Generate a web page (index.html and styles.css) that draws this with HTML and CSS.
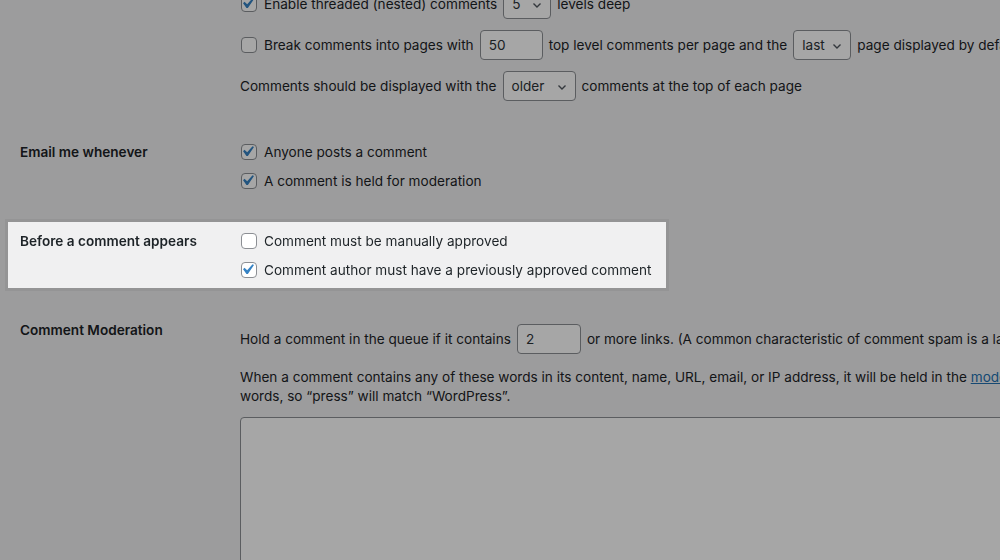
FILE: index.html
```html
<!DOCTYPE html>
<html>
<head>
    <title>Discussion Settings</title>
    <meta charset="utf-8">
    <link rel="stylesheet" href="styles.css">
</head>
<body>
<div class="overlay"></div>

<div class="page">

    <div class="row row-other">
        <div class="th"></div>
        <div class="td lines-wide">
            <div class="line">
                <label class="check"><span class="box"><svg class="tick" viewBox="0 0 20 20"><path d="M14.83 4.89l1.34.94-5.81 8.38H9.02L5.78 9.67l1.34-1.25 2.57 2.4z"/></svg></span>Enable threaded (nested) comments</label>
                <span class="select sel-5">5<svg class="chev" viewBox="0 0 12 12"><path d="M2.5 4.5l3.5 3.5 3.5-3.5"/></svg></span>
                <span>levels deep</span>
            </div>
            <div class="line">
                <label class="check"><span class="box"></span>Break comments into pages with</label>
                <span class="input inp-50">50</span>
                <span>top level comments per page and the</span>
                <span class="select sel-last">last<svg class="chev" viewBox="0 0 12 12"><path d="M2.5 4.5l3.5 3.5 3.5-3.5"/></svg></span>
                <span>page displayed by default</span>
            </div>
            <div class="line">
                <span>Comments should be displayed with the</span>
                <span class="select sel-older">older<svg class="chev" viewBox="0 0 12 12"><path d="M2.5 4.5l3.5 3.5 3.5-3.5"/></svg></span>
                <span>comments at the top of each page</span>
            </div>
        </div>
    </div>

    <div class="row row-check row-email">
        <div class="th">Email me whenever</div>
        <div class="td">
            <label class="check"><span class="box"><svg class="tick" viewBox="0 0 20 20"><path d="M14.83 4.89l1.34.94-5.81 8.38H9.02L5.78 9.67l1.34-1.25 2.57 2.4z"/></svg></span>Anyone posts a comment</label>
            <label class="check"><span class="box"><svg class="tick" viewBox="0 0 20 20"><path d="M14.83 4.89l1.34.94-5.81 8.38H9.02L5.78 9.67l1.34-1.25 2.57 2.4z"/></svg></span>A comment is held for moderation</label>
        </div>
    </div>

    <div class="row row-check spotlight">
        <div class="th">Before a comment appears</div>
        <div class="td">
            <label class="check"><span class="box"></span>Comment must be manually approved</label>
            <label class="check"><span class="box"><svg class="tick" viewBox="0 0 20 20"><path d="M14.83 4.89l1.34.94-5.81 8.38H9.02L5.78 9.67l1.34-1.25 2.57 2.4z"/></svg></span>Comment author must have a previously approved comment</label>
        </div>
    </div>

    <div class="row row-moderation">
        <div class="th">Comment Moderation</div>
        <div class="td lines-wide">
            <div class="line">
                <span>Hold a comment in the queue if it contains</span>
                <span class="input inp-2">2</span>
                <span>or more links. (A common characteristic of comment spam is a large number of hyperlinks.)</span>
            </div>
            <p class="description">When a comment contains any of these words in its content, name, URL, email, or IP address, it will be held in the <a href="#">moderation queue</a>. One word or IP address per line. It will match inside<br>words, so &#8220;press&#8221; will match &#8220;WordPress&#8221;.</p>
            <div class="textarea"></div>
        </div>
    </div>

</div>
</body>
</html>
```

FILE: styles.css
```css
html, body {
    margin: 0;
    padding: 0;
    height: 100%;
    overflow: hidden;
}

body {
    font: 13.6px Inter, "Liberation Sans", sans-serif;
    line-height: 20px;
    color: #1d2327;
    background: #f0f0f1;
}

.overlay {
    position: fixed;
    top: 0;
    left: 0;
    right: 0;
    bottom: 0;
    background: rgba(0, 0, 0, 0.35);
    z-index: 1;
}

.page {
    margin-top: -20px;
    width: 1600px;
}

.row {
    display: flex;
    padding: 9px 0 8px 20px;
}

.th {
    width: 220px;
    flex: none;
    font-weight: 600;
}

.td {
    flex: 1;
}

.lines-wide {
    white-space: nowrap;
}

.line {
    display: flex;
    align-items: center;
    gap: 6px;
    height: 30px;
    margin-bottom: 11px;
}

.line:last-child {
    margin-bottom: 0;
}

.row-email {
    margin-top: 24px;
}

.row-check .td {
    display: flex;
    flex-direction: column;
    gap: 9px;
}

.spotlight {
    position: relative;
    z-index: 2;
    width: 632px;
    margin: 23px 0 0 8px;
    padding: 9px 14px 8px 12px;
    background: #f0f0f1;
    box-shadow: 0 0 0 3px rgba(0, 0, 0, 0.05);
}

.check {
    display: flex;
    align-items: center;
    white-space: nowrap;
}

.box {
    position: relative;
    box-sizing: border-box;
    width: 16px;
    height: 16px;
    margin: 0 7px 0 1px;
    border: 1px solid #8c8f94;
    border-radius: 4px;
    background: #fff;
    flex: none;
}

.tick {
    position: absolute;
    top: -4px;
    left: -5px;
    width: 21px;
    height: 21px;
    fill: #3582c4;
}

.select, .input {
    box-sizing: border-box;
    display: flex;
    align-items: center;
    height: 30px;
    padding-left: 8px;
    border: 1px solid #8c8f94;
    border-radius: 4px;
    background: #fff;
    color: #2c3338;
}

.select {
    position: relative;
}

.chev {
    position: absolute;
    right: 7px;
    top: 9px;
    width: 12px;
    height: 12px;
    fill: none;
    stroke: #50575e;
    stroke-width: 1.4;
}

.sel-5 { width: 48px; }
.sel-last { width: 58px; }
.sel-older { width: 73px; }
.inp-50 { width: 63px; }
.inp-2 { width: 64px; }

.row-moderation {
    margin-top: 27px;
    padding-top: 5px;
}

.row-moderation .td {
    padding-top: 4px;
}

.description {
    margin: 14px 0 0 0;
    line-height: 19px;
}

.description a {
    color: #2271b1;
}

.textarea {
    box-sizing: border-box;
    margin-top: 11px;
    width: 1200px;
    height: 300px;
    border: 1px solid #8c8f94;
    border-radius: 4px;
    background: #fff;
}
```
